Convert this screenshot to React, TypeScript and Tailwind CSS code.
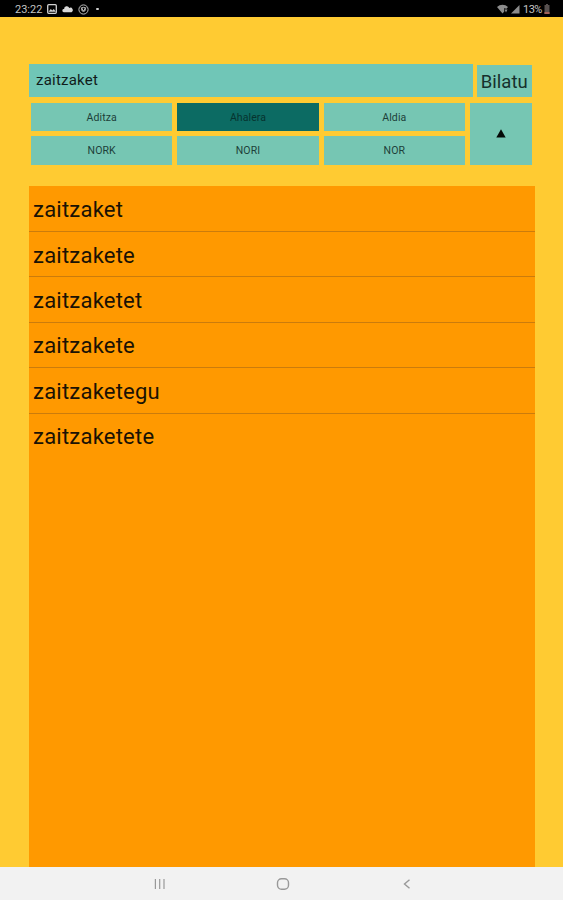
const filters = ['Aditza', 'Ahalera', 'Aldia', 'NORK', 'NORI', 'NOR'];
const results = ['zaitzaket', 'zaitzakete', 'zaitzaketet', 'zaitzakete', 'zaitzaketegu', 'zaitzaketete'];

function StatusBar() {
  return (
    <header className="flex h-[17px] shrink-0 items-center bg-black pt-px pr-[13px] pl-[15px] text-[11px] leading-none text-[#c4c4c4]">
      <span className="w-[27px] whitespace-nowrap">23:22</span>
      <svg className="ml-[5px]" width="10" height="10" viewBox="0 0 10 10" fill="none" stroke="#d0d0d0">
        <rect x="0.7" y="0.7" width="8.6" height="8.6" rx="1" strokeWidth="1.3" />
        <path d="M1.5 7.8 3.8 5l1.5 1.6L6.8 5l2 2.8z" fill="#d0d0d0" stroke="none" />
      </svg>
      <svg className="ml-[5px]" width="11" height="8" viewBox="0 0 11 8" fill="#d8d8d8">
        <path d="M1.8 7.2a1.6 1.6 0 0 1 .3-3.2A2.7 2.7 0 0 1 7.3 3a2.2 2.2 0 0 1 2.2 4.2z" />
      </svg>
      <svg className="ml-[5px]" width="11" height="11" viewBox="0 0 11 11" fill="none" stroke="#bdbdbd">
        <circle cx="5.5" cy="5.5" r="4.6" />
        <circle cx="5.5" cy="5.3" r="2" />
        <path d="m3 3.2 2.5 4L8 3.2" />
      </svg>
      <span className="ml-[7px] size-[2.5px] rounded-full bg-[#d0d0d0]" />
      <svg className="ml-auto" width="11" height="10" viewBox="0 0 11 10" fill="#8c8c8c">
        <path d="M0 3a8 8 0 0 1 11 0L9.5 4.8 7 4.3 7.3 7.5 5.5 9.5z" />
        <path d="m7.5 5.5 1.5 3 1.5-3z" />
      </svg>
      <svg className="ml-[3px]" width="9" height="9" viewBox="0 0 9 9">
        <path d="M8.5 0v8.5H0z" fill="#8c8c8c" />
      </svg>
      <span className="ml-[3px] w-[20px] whitespace-nowrap text-[11px] tracking-[-0.5px]">13%</span>
      <svg className="ml-px" width="6" height="10" viewBox="0 0 6 10">
        <path d="M2 0h2v1h1.5v9h-5V1H2z" fill="#57504f" />
        <path d="M.5 8h5v2h-5z" fill="#a06058" />
      </svg>
    </header>
  );
}

function NavigationBar() {
  return (
    <nav className="flex h-[33px] shrink-0 items-center bg-[#f2f2f2] pl-[154px]">
      <svg width="12" height="12" viewBox="0 0 12 12" stroke="#999" strokeWidth="1.2">
        <path d="M1.4 1v10M5.7 1v10M10 1v10" />
      </svg>
      <svg className="ml-[110px]" width="14" height="14" viewBox="0 0 14 14" fill="none" stroke="#999" strokeWidth="1.4">
        <rect x="1.5" y="1.7" width="11" height="10.6" rx="4" />
      </svg>
      <svg className="ml-[113px]" width="8" height="12" viewBox="0 0 8 12" fill="none" stroke="#999" strokeWidth="1.4">
        <path d="M6.5 1.8 1.5 6l5 4.2" />
      </svg>
    </nav>
  );
}

export default function App() {
  return (
    <div className="flex h-[900px] w-[563px] flex-col overflow-hidden bg-[#ffcb32] font-['Roboto',sans-serif] text-[#101c1a]">
      <StatusBar />
      <main className="flex min-h-0 flex-1 flex-col pt-[47.4px] pl-[28.5px]">
        <div className="flex w-[503.5px] items-end justify-between">
          <input
            className="h-[33px] w-[444.5px] bg-[#70c6b7] pr-2 pb-[2px] pl-[7.5px] text-[15px] tracking-[0.22px] outline-none"
            defaultValue="zaitzaket"
          />
          <button className="h-[32px] w-[55.5px] bg-[#76c6b3] pt-[2px] text-[18.5px] leading-none text-[#16302c]">Bilatu</button>
        </div>
        <div className="mt-[5.6px] flex h-[62px] w-[503.5px] justify-between pl-[2.5px]">
          <div className="grid w-[434px] grid-cols-3 grid-rows-2 gap-[5px]">
            {filters.map((name) => (
              <button
                key={name}
                className={`pt-[2px] text-[10.5px] leading-none tracking-[0.1px] ${name === 'Ahalera' ? 'bg-[#0c6b63] text-[#06332f]' : 'bg-[#76c6b3] text-[#1d3f39]'}`}
              >
                {name}
              </button>
            ))}
          </div>
          <button className="flex w-[62px] items-center justify-center bg-[#76c6b3] pb-px">
            <svg width="10" height="9" viewBox="0 0 10 9">
              <path d="M5 .3 9.7 8.5H.3z" fill="#050a08" />
            </svg>
          </button>
        </div>
        <ul className="mt-[21px] min-h-0 w-[506.5px] flex-1 bg-[#ff9900] pt-[0.6px]">
          {results.map((word, i) => (
            <li
              key={i}
              className="flex h-[45.4px] items-center border-b border-[#cb7c0c] pl-[4.5px] text-[22px] leading-none tracking-[0.22px] text-[#1a1204] last:border-transparent"
            >
              <span className="pt-[3px]">{word}</span>
            </li>
          ))}
        </ul>
      </main>
      <NavigationBar />
    </div>
  );
}
